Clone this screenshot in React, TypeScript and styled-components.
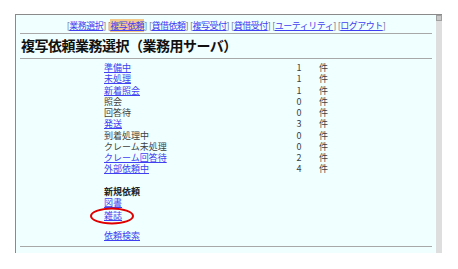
import { Fragment } from 'react';
import styled, { createGlobalStyle } from 'styled-components';

const GlobalStyle = createGlobalStyle`
  body {
    margin: 0;
    background: #ffffff;
    font-family: "Noto Sans CJK JP", "Noto Sans", sans-serif;
  }
`;

const Window = styled.div`
  margin: 14px 0 0 15px;
  width: 427px;
  height: 239px;
  display: flex;
  box-sizing: border-box;
  border-top: 1px solid #8a8a8a;
  border-left: 1px solid #8a8a8a;
`;

const Page = styled.div`
  flex: 1;
  background: #f0ffff;
  padding: 0 4px;
  display: flex;
  flex-direction: column;
`;

const ScrollBar = styled.div`
  width: 6px;
  background: #dedede;
  display: flex;
  flex-direction: column;
`;

const ScrollButton = styled.div`
  height: 6px;
  background: #c8c8c8;
  border: 1px solid #a0a0a0;
  box-sizing: border-box;
`;

const Nav = styled.nav`
  display: flex;
  justify-content: center;
  gap: 2px;
  padding-top: 5px;
  height: 13px;
  font-size: 9px;
  line-height: 11px;
  letter-spacing: -0.5px;
`;

const NavItem = styled.span`
  color: #6a6a8a;
  white-space: nowrap;
`;

const NavLink = styled.a<{ $active?: boolean }>`
  color: #4040f0;
  text-decoration: underline;
  background: ${(p) => (p.$active ? '#f3c98c' : 'transparent')};
`;

const Rule = styled.div`
  height: 1px;
  background: #a8a8a8;
`;

const Title = styled.h1`
  margin: 0;
  height: 24px;
  padding-left: 1px;
  font-size: 14px;
  line-height: 23px;
  font-weight: bold;
  letter-spacing: -0.5px;
  color: #111;
`;

const Body = styled.div`
  padding: 3px 0 0 84px;
  font-size: 9px;
  line-height: 11.25px;
  color: #404040;
  flex: 1;
`;

const StatusTable = styled.div`
  display: grid;
  grid-template-columns: 190px 10px auto;
`;

const Count = styled.span`
  text-align: center;
`;

const Unit = styled.span`
  padding-left: 15px;
`;

const Link = styled.a`
  color: #4040f0;
  text-decoration: underline;
`;

const Heading = styled.div`
  margin-top: 11.25px;
  font-weight: bold;
  color: #222;
`;

const Row = styled.div<{ $gap?: number }>`
  margin-top: ${(p) => p.$gap ?? 0}px;
`;

const Circled = styled.span`
  position: relative;
  display: inline-block;
  height: 11.25px;
  &::after {
    content: '';
    position: absolute;
    left: -14px;
    top: 50%;
    transform: translateY(-50%);
    width: 40px;
    height: 13px;
    border: 2px solid #e00000;
    border-radius: 50%;
  }
`;

const BottomRule = styled(Rule)`
  margin-bottom: 6px;
`;

const navItems = [
  { label: '業務選択' },
  { label: '複写依頼', active: true },
  { label: '貸借依頼' },
  { label: '複写受付' },
  { label: '貸借受付' },
  { label: 'ユーティリティ' },
  { label: 'ログアウト' },
];

const statuses = [
  { label: '準備中', count: 1, link: true },
  { label: '未処理', count: 1, link: true },
  { label: '新着照会', count: 1, link: true },
  { label: '照会', count: 0, link: false },
  { label: '回答待', count: 0, link: false },
  { label: '発送', count: 3, link: true },
  { label: '到着処理中', count: 0, link: false },
  { label: 'クレーム未処理', count: 0, link: false },
  { label: 'クレーム回答待', count: 2, link: true },
  { label: '外部依頼中', count: 4, link: true },
];

const App = () => (
  <>
    <GlobalStyle />
    <Window>
      <Page>
        <Nav>
          {navItems.map((item) => (
            <NavItem key={item.label}>
              [<NavLink $active={item.active}>{item.label}</NavLink>]
            </NavItem>
          ))}
        </Nav>
        <Rule />
        <Title>複写依頼業務選択（業務用サーバ）</Title>
        <Rule />
        <Body>
          <StatusTable>
            {statuses.map((s) => (
              <Fragment key={s.label}>
                <span>{s.link ? <Link>{s.label}</Link> : s.label}</span>
                <Count>{s.count}</Count>
                <Unit>件</Unit>
              </Fragment>
            ))}
          </StatusTable>
          <Heading>新規依頼</Heading>
          <Row><Link>図書</Link></Row>
          <Row $gap={2}><Circled><Link>雑誌</Link></Circled></Row>
          <Row $gap={8}><Link>依頼検索</Link></Row>
        </Body>
        <BottomRule />
      </Page>
      <ScrollBar>
        <ScrollButton />
      </ScrollBar>
    </Window>
  </>
);

export default App;
